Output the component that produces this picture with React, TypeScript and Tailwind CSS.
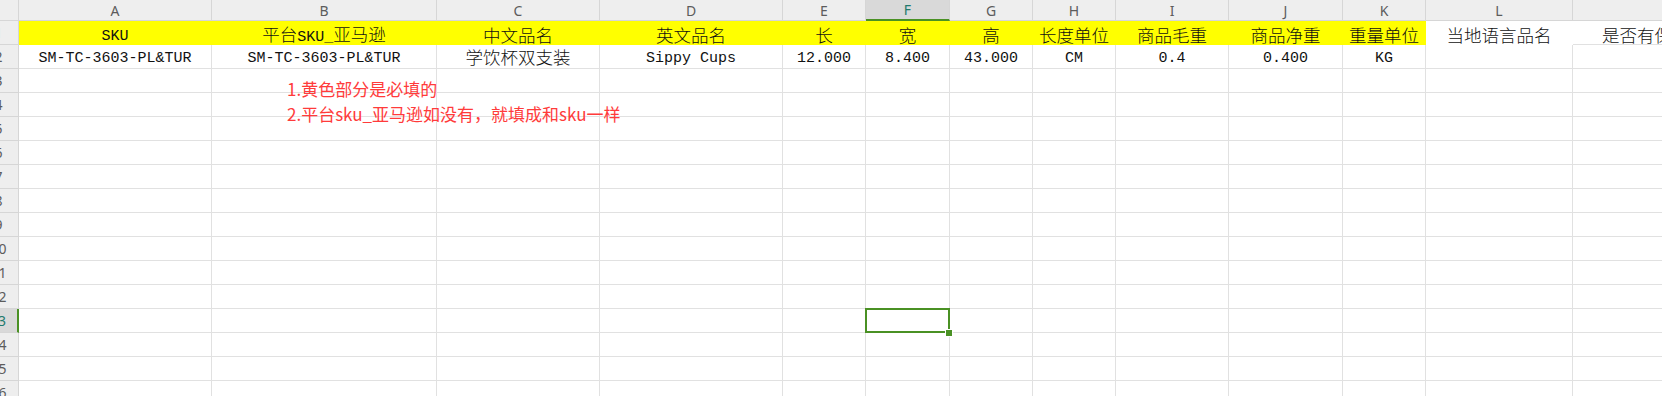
import React from "react";

const COLS: { letter: string; w: string }[] = [
  { letter: "A", w: "w-[193px]" },
  { letter: "B", w: "w-[225px]" },
  { letter: "C", w: "w-[163px]" },
  { letter: "D", w: "w-[183px]" },
  { letter: "E", w: "w-[83px]" },
  { letter: "F", w: "w-[84px]" },
  { letter: "G", w: "w-[83px]" },
  { letter: "H", w: "w-[83px]" },
  { letter: "I", w: "w-[113px]" },
  { letter: "J", w: "w-[114px]" },
  { letter: "K", w: "w-[83px]" },
  { letter: "L", w: "w-[147px]" },
  { letter: "M", w: "w-[240px]" },
];

const ROW1 = [
  "SKU",
  "平台SKU_亚马逊",
  "中文品名",
  "英文品名",
  "长",
  "宽",
  "高",
  "长度单位",
  "商品毛重",
  "商品净重",
  "重量单位",
  "当地语言品名",
  "是否有保质期",
];

const ROW2 = [
  "SM-TC-3603-PL&TUR",
  "SM-TC-3603-PL&TUR",
  "学饮杯双支装",
  "Sippy Cups",
  "12.000",
  "8.400",
  "43.000",
  "CM",
  "0.4",
  "0.400",
  "KG",
  "",
  "",
];

const MONO = "font-['Liberation_Mono',monospace] text-[15px]";
const CJK = "font-['Noto_Sans_CJK_SC',sans-serif] text-[17.5px] font-light";

function CellText({ s }: { s: string }) {
  const parts = s.split(/([\u3000-\u9fff\uff00-\uffef]+)/).filter((p) => p.length > 0);
  return (
    <span className="whitespace-pre leading-none">
      {parts.map((p, i) =>
        /[\u3000-\u9fff\uff00-\uffef]/.test(p) ? (
          <span key={i} className={CJK}>
            {p}
          </span>
        ) : (
          <span key={i} className={MONO}>
            {p}
          </span>
        )
      )}
    </span>
  );
}

const HEAD_FONT = "font-['Noto_Sans',sans-serif] text-[14px]";

export default function App() {
  const bodyRows = Array.from({ length: 16 }, (_, i) => i + 1);
  return (
    <div className="relative w-[1662px] h-[396px] overflow-hidden bg-white text-black">
      <div className="ml-[-21px] flex flex-col w-max">
        {/* column header row */}
        <div className="flex h-[21px]">
          <div className="w-[40px] shrink-0 bg-[#eeeeee] border-r border-b border-[#d6d6d6]" />
          {COLS.map((c) =>
            c.letter === "F" ? (
              <div
                key={c.letter}
                className={`${c.w} shrink-0 bg-[#d9d9d9] border-r border-[#d6d6d6] border-b-2 border-b-[#4a9124] flex items-center justify-center text-[#1f7a6d] ${HEAD_FONT}`}
              >
                {c.letter}
              </div>
            ) : (
              <div
                key={c.letter}
                className={`${c.w} shrink-0 bg-[#eeeeee] border-r border-b border-[#d6d6d6] flex items-center justify-center text-[#5c5c5c] ${HEAD_FONT}`}
              >
                {c.letter}
              </div>
            )
          )}
        </div>

        {bodyRows.map((r) => (
          <div key={r} className="flex h-[24px]">
            {r === 13 ? (
              <div
                className={`w-[40px] shrink-0 bg-[#d9d9d9] border-r-2 border-r-[#4a9124] border-b border-b-[#d6d6d6] flex items-center justify-center text-[#1f7a6d] ${HEAD_FONT}`}
              >
                {r}
              </div>
            ) : (
              <div
                className={`w-[40px] shrink-0 bg-[#eeeeee] border-r border-b border-[#d6d6d6] flex items-center justify-center text-[#5c5c5c] ${HEAD_FONT}`}
              >
                {r}
              </div>
            )}
            {COLS.map((c, ci) => {
              if (r === 1) {
                if (ci === 12) {
                  return (
                    <div
                      key={c.letter}
                      className={`${c.w} shrink-0 bg-white border-r border-r-transparent border-b border-b-[#e1e1e1] flex items-center justify-start pl-[29px] pt-[4px] text-[#111111]`}
                    >
                      <CellText s={ROW1[ci]} />
                    </div>
                  );
                }
                const cls =
                  ci <= 10
                    ? "bg-[#ffff00] border-r border-b border-transparent"
                    : "bg-white border-r border-b border-transparent";
                return (
                  <div
                    key={c.letter}
                    className={`${c.w} shrink-0 ${cls} flex items-center justify-center pt-[4px] text-[#111111]`}
                  >
                    <CellText s={ROW1[ci]} />
                  </div>
                );
              }
              if (r === 2) {
                return (
                  <div
                    key={c.letter}
                    className={`${c.w} shrink-0 border-r border-b border-[#e1e1e1] flex items-center justify-center pt-[1px] text-[#111111]`}
                  >
                    <CellText s={ROW2[ci]} />
                  </div>
                );
              }
              if (r === 13 && c.letter === "F") {
                return (
                  <div
                    key={c.letter}
                    className={`${c.w} shrink-0 relative border-r border-b border-[#e1e1e1]`}
                  >
                    <div className="absolute -left-px -top-px -right-px -bottom-px border-2 border-[#4a9124]" />
                    <div className="absolute right-[-3px] bottom-[-4px] w-[6px] h-[6px] bg-[#4a9124] outline outline-1 outline-white" />
                  </div>
                );
              }
              return (
                <div
                  key={c.letter}
                  className={`${c.w} shrink-0 border-r border-b border-[#e1e1e1]`}
                />
              );
            })}
          </div>
        ))}
      </div>

      {/* floating text box note */}
      <div className="absolute left-[287px] top-[76px] font-['Noto_Sans_CJK_SC',sans-serif] text-[17px] leading-[25px] text-[#ff3b3b] whitespace-nowrap">
        <div>1.黄色部分是必填的</div>
        <div>2.平台sku_亚马逊如没有，就填成和sku一样</div>
      </div>
    </div>
  );
}
